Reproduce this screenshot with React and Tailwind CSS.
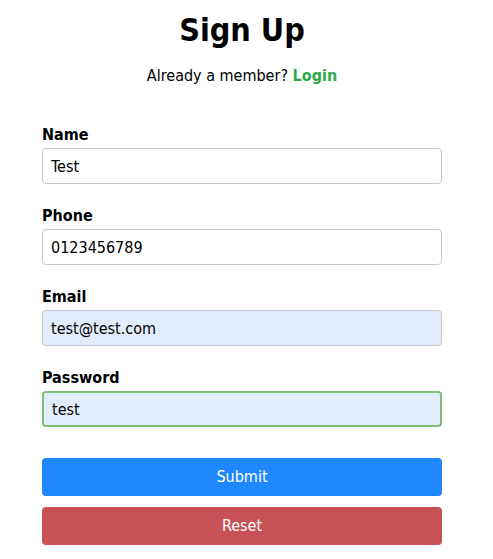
import React from 'react'

const fields = [
  { label: 'Name', value: 'Test', type: 'text', autofill: false, focus: false },
  { label: 'Phone', value: '0123456789', type: 'text', autofill: false, focus: false },
  { label: 'Email', value: 'test@test.com', type: 'email', autofill: true, focus: false },
  { label: 'Password', value: 'test', type: 'text', autofill: true, focus: true },
]

const Field = ({ label, value, type, autofill, focus }) => {
  const base = 'block h-[36px] w-full rounded-[4px] px-[8px] text-[16px] text-black outline-none'
  const skin = focus
    ? 'border-2 border-[#7cc078] bg-[#e3ecfc] px-[7px]'
    : autofill
      ? 'border border-[#c6c9cf] bg-[#e3ecfc]'
      : 'border border-[#c8c8c8] bg-white'
  return (
    <div className="mt-[22px] first:mt-0">
      <label className="mb-[3px] block text-[16px] font-bold leading-[20px] text-black">{label}</label>
      <input type={type} defaultValue={value} readOnly className={`${base} ${skin}`} />
    </div>
  )
}

export default function App() {
  return (
    <div
      className="min-h-[559px] bg-white"
      style={{ fontFamily: '"DejaVu Sans Condensed", "DejaVu Sans", sans-serif' }}
    >
      <div className="ml-[42px] w-[400px]">
        <h1 className="pt-[10px] text-center text-[32px] font-bold leading-[40px] text-black">Sign Up</h1>
        <p className="mt-[16px] text-center text-[16px] leading-[20px] text-black">
          Already a member? <a className="font-bold text-[#2fa84a]">Login</a>
        </p>

        <form className="mt-[38px] pt-px">
          {fields.map((f) => (
            <Field key={f.label} {...f} />
          ))}

          <button
            type="button"
            className="mt-[31px] block h-[38px] w-full rounded-[4px] bg-[#1f88fe] text-[16px] text-white"
          >
            Submit
          </button>
          <button
            type="button"
            className="mt-[11px] block h-[38px] w-full rounded-[4px] bg-[#c75357] text-[16px] text-white"
          >
            Reset
          </button>
        </form>
      </div>
    </div>
  )
}
